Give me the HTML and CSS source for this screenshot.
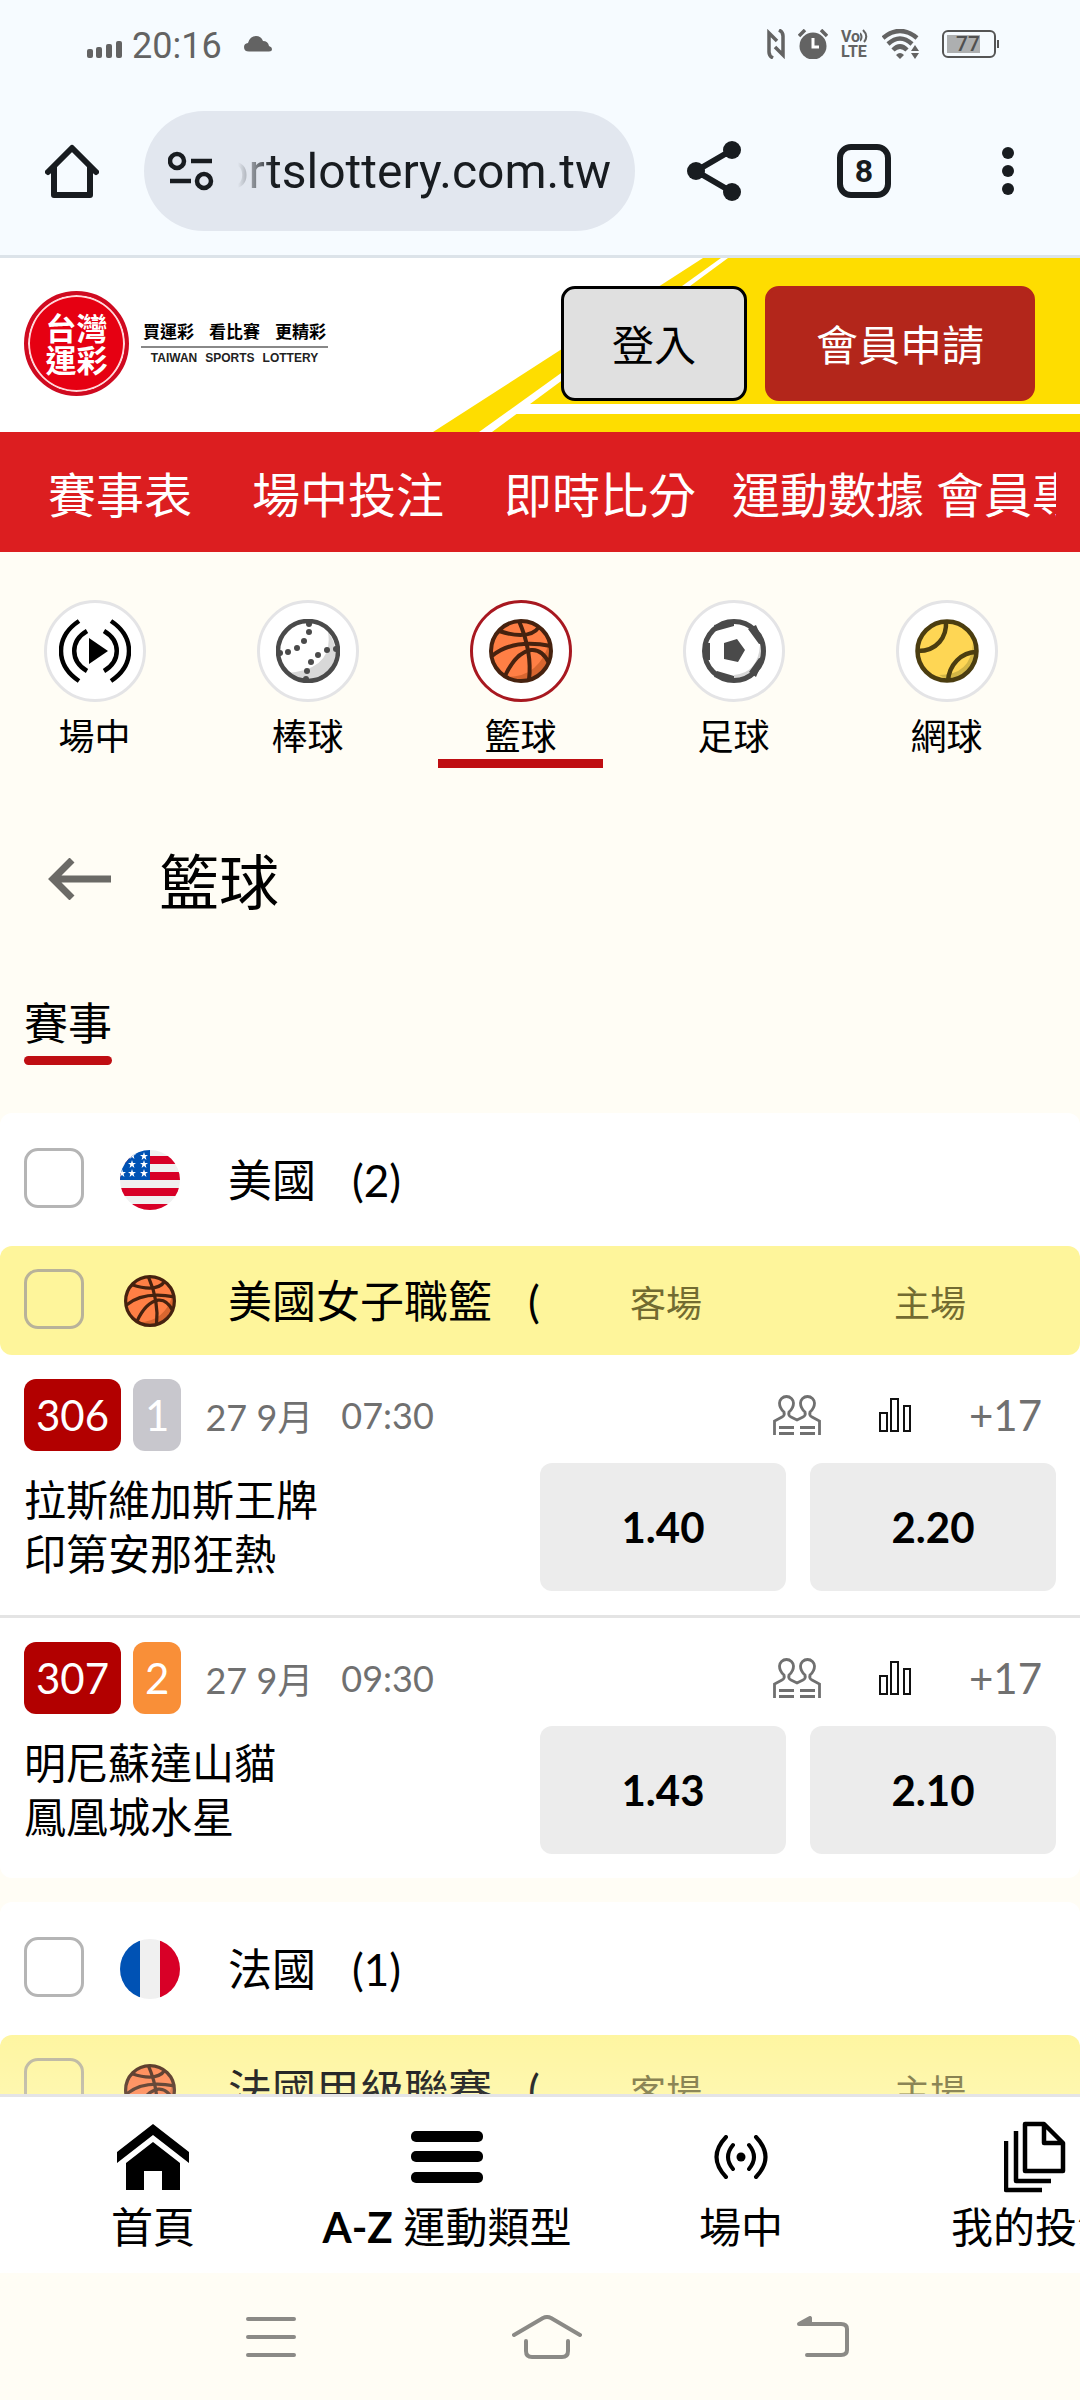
FILE: index.html
```html
<!DOCTYPE html>
<html lang="zh-Hant">
<head>
    <meta charset="UTF-8">
    <meta name="viewport" content="width=device-width, initial-scale=1.0">
    <title>台灣運彩 - 籃球</title>
    <link rel="stylesheet" href="styles.css">
</head>
<body>
    <!-- shared icons -->
    <svg class="sprite" aria-hidden="true">
        <symbol id="basketball" viewBox="0 0 64 64">
            <circle cx="32" cy="32" r="30" fill="#ff7f45"/>
            <path d="M60 24A30 30 0 0 1 18 58Q50 58 60 24Z" fill="#d9662f"/>
            <g fill="none" stroke="#46220f" stroke-width="4">
                <circle cx="32" cy="32" r="30"/>
                <path d="M30 2C36 16 43 36 40 61"/>
                <path d="M3 37C16 26 36 22 62 27"/>
                <path d="M10 12C22 16 42 20 50 8"/>
                <path d="M16 57C22 44 30 33 42 31C51 30 56 36 60 44"/>
            </g>
        </symbol>
        <symbol id="people" viewBox="0 0 48 40">
            <path d="M1.500 40V26L9 22Q12 20.500 11 17C7.500 14 6.500 11 6.500 8A7 6.500 0 0 1 20.500 8C20.500 11 19.500 14 16 17Q15 20.500 18 22L24 25L30 22Q33 20.500 32 17C28.500 14 27.500 11 27.500 8A7 6.500 0 0 1 41.500 8C41.500 11 40.500 14 37 17Q36 20.500 39 22L46.500 26V40M6 32.500H21M6 38.500H21M27 32.500H42M27 38.500H42" fill="none" stroke="#707070" stroke-width="2.800"/>
        </symbol>
        <symbol id="stats" viewBox="0 0 32 34">
            <path d="M1 15H8V33H1ZM12 1H19V33H12ZM25 8H31V33H25Z" fill="none" stroke="#111" stroke-width="2"/>
        </symbol>
        <symbol id="star" viewBox="0 0 10 10">
            <path d="M5 0L6.200 3.600H10L7 6L8 10L5 7.600L2 10L3 6L0 3.600H3.800Z" fill="#fff"/>
        </symbol>
    </svg>

    <div class="status-bar">
        <div class="status-left">
            <svg width="36" height="18" viewBox="0 0 36 18" fill="#636363"><rect y="8" width="6" height="9" rx="2"/><rect x="9" y="6" width="6" height="11" rx="2"/><rect x="19" y="3" width="6" height="14" rx="2"/><rect x="29" width="6" height="17" rx="2"/></svg>
            <span class="clock">20:16</span>
            <svg class="cloud" width="28" height="16" viewBox="0 0 28 16" fill="#636363"><path d="M5 15.500Q0 15.500 0 11Q0 7.500 4 7Q6 0 12 0Q17 0 19 5Q24 5 25 10Q28 11 28 13Q28 15.500 25 15.500Z"/></svg>
        </div>
        <div class="status-right">
            <svg width="18" height="30" viewBox="0 0 18 30" fill="none" stroke="#636363" stroke-width="3.500"><path d="M6 29Q2 27 2 23V4L10 12M12 1Q16 3 16 7V26L8 18"/></svg>
            <svg width="30" height="30" viewBox="0 0 30 30"><circle cx="15" cy="17" r="13.500" fill="#636363"/><path d="M1 7L7 1M29 7L23 1" stroke="#636363" stroke-width="3.500"/><path d="M15 9V18H21" fill="none" stroke="#fff" stroke-width="3"/></svg>
            <div class="volte">
                <span>Vo<svg width="8" height="14" viewBox="0 0 8 14" fill="none" stroke="#636363" stroke-width="2"><path d="M0 4Q3 8 0 12M3 1Q9 7 4 13"/></svg></span>
                <span>LTE</span>
            </div>
            <svg class="wifi" width="38" height="30" viewBox="0 0 38 30"><g fill="none" stroke="#636363" stroke-width="4.500"><path d="M1 9Q18 -5 35 9"/><path d="M6 15Q18 4 30 15"/><path d="M11 21Q18 14 25 21"/></g><path d="M14 26Q18 22 22 26L18 30ZM29 22L33 16L37 22ZM29 24H37L33 30Z" fill="#636363"/></svg>
            <div class="battery"><span>77</span></div>
        </div>
    </div>

    <div class="browser-bar">
        <button class="icon-btn" aria-label="Home">
            <svg width="54" height="54" viewBox="0 0 54 54" fill="none" stroke="#181c20" stroke-width="6" stroke-linecap="round" stroke-linejoin="round"><path d="M3 28L27 4L51 28M9 23V51H45V23"/></svg>
        </button>
        <div class="url-box">
            <svg width="46" height="40" viewBox="0 0 46 40" fill="none" stroke="#181c20" stroke-width="4.500"><circle cx="9" cy="10" r="7"/><path d="M23 10H44M2 30H23"/><circle cx="36" cy="30" r="7"/></svg>
            <input class="url" type="text" value="ortslottery.com.tw" aria-label="Address">
        </div>
        <button class="icon-btn" aria-label="Share">
            <svg width="54" height="60" viewBox="0 0 54 60" fill="#181c20"><path d="M45 9L9 30L45 51" fill="none" stroke="#181c20" stroke-width="6"/><circle cx="9" cy="30" r="9"/><circle cx="45" cy="9" r="9"/><circle cx="45" cy="51" r="9"/></svg>
        </button>
        <button class="tabs-btn" aria-label="Tabs">8</button>
        <button class="icon-btn" aria-label="Menu">
            <svg width="12" height="48" viewBox="0 0 12 48" fill="#181c20"><circle cx="6" cy="6" r="6"/><circle cx="6" cy="24" r="6"/><circle cx="6" cy="42" r="6"/></svg>
        </button>
    </div>

    <header class="site-header">
        <svg class="header-art" width="648" height="174" viewBox="0 0 648 174">
            <path d="M1 174L271 0H289L47 174Z" fill="#fedd00"/>
            <path d="M60 174L296 0H648V174Z" fill="#fedd00"/>
            <path d="M80 156L96 146H648V156Z" fill="#fff"/>
        </svg>
        <a class="logo" href="#">
            <span class="logo-mark"><span>台灣</span><span>運彩</span></span>
            <span class="logo-text">
                <span class="slogan"><span>買運彩</span><span>看比賽</span><span>更精彩</span></span>
                <span class="logo-en"><span>TAIWAN</span><span>SPORTS</span><span>LOTTERY</span></span>
            </span>
        </a>
        <div class="header-buttons">
            <button class="btn btn-login">登入</button>
            <button class="btn btn-join">會員申請</button>
        </div>
    </header>

    <nav class="main-nav">
        <div class="nav-scroll">
            <a href="#">賽事表</a>
            <a href="#">場中投注</a>
            <a href="#">即時比分</a>
            <a class="tight" href="#">運動數據</a>
            <a class="tight" href="#">會員專區</a>
        </div>
    </nav>

    <main>
        <div class="sports">
            <a class="sport" href="#">
                <span class="ring"><svg width="72" height="64" viewBox="0 0 72 64"><path d="M20 2C-4 18 -4 46 20 62M28 12C11 22 11 42 28 52M52 2C76 18 76 46 52 62M45 12C62 22 62 42 45 52" fill="none" stroke="#000" stroke-width="4.500"/><path d="M30 19L49 32L30 45Z"/></svg></span>
                <span class="sport-name">場中</span>
            </a>
            <a class="sport" href="#">
                <span class="ring"><svg width="64" height="64" viewBox="0 0 64 64"><circle cx="32" cy="32" r="30" fill="#fff"/><path d="M52 13Q58 50 12 54Q34 68 54 50Q66 32 52 13Z" fill="#d8d8d8"/><circle cx="32" cy="32" r="30" fill="none" stroke="#4a4a4a" stroke-width="4.500"/><g fill="#4a4a4a"><circle cx="33" cy="5" r="3"/><circle cx="33" cy="13" r="3"/><circle cx="28" cy="22" r="3"/><circle cx="21" cy="29" r="3"/><circle cx="12" cy="33" r="3"/><circle cx="4" cy="34" r="3"/><circle cx="60" cy="30" r="3"/><circle cx="51" cy="31" r="3"/><circle cx="42" cy="36" r="3"/><circle cx="35" cy="43" r="3"/><circle cx="31" cy="52" r="3"/><circle cx="30" cy="60" r="3"/></g></svg></span>
                <span class="sport-name">棒球</span>
            </a>
            <a class="sport active" href="#">
                <span class="ring"><svg width="64" height="64"><use href="#basketball"/></svg></span>
                <span class="sport-name">籃球</span>
            </a>
            <a class="sport" href="#">
                <span class="ring"><svg width="64" height="64" viewBox="0 0 64 64"><circle cx="32" cy="32" r="30" fill="#fff"/><path d="M58 26Q56 54 32 56V62Q62 58 62 26Z" fill="#d8d8d8"/><circle cx="32" cy="32" r="29.500" fill="none" stroke="#4a4a4a" stroke-width="5"/><path d="M22 24L35 20L43 31L36 43L22 40ZM14 12L32 7V2L12 6ZM46 10L57 25L62 24L54 6ZM47 53L57 39L62 40L54 58ZM15 52L32 57V62L12 58ZM2 24H8V41H2Z" fill="#4a4a4a"/></svg></span>
                <span class="sport-name">足球</span>
            </a>
            <a class="sport" href="#">
                <span class="ring"><svg width="64" height="64" viewBox="0 0 64 64"><circle cx="32" cy="32" r="30" fill="#fed654"/><path d="M58 24Q56 56 24 56Q44 68 58 48Q64 34 58 24Z" fill="#d3b646"/><g fill="none" stroke="#4b3d10" stroke-width="4.500"><circle cx="32" cy="32" r="29.500"/><path d="M31 2C32 18 22 32 3 32M33 62C34 46 46 33 62 33"/></g></svg></span>
                <span class="sport-name">網球</span>
            </a>
        </div>

        <div class="page-title">
            <button class="back-btn" aria-label="返回">
                <svg width="63" height="42" viewBox="0 0 63 42" fill="none" stroke="#6b6a66" stroke-width="7"><path d="M63 21H6M24 2L5 21L24 40"/></svg>
            </button>
            <h1>籃球</h1>
        </div>

        <div class="tabs">
            <a class="tab" href="#">賽事</a>
        </div>

        <section class="country">
            <div class="country-head">
                <input type="checkbox" id="usa">
                <span class="row-icon"><svg class="flag" width="60" height="60" viewBox="0 0 60 60"><path d="M0 0H60V60H0Z" fill="#f0f0f0"/><path d="M0 6H60V14H0ZM0 22H60V30H0ZM0 38H60V46H0ZM0 54H60V60H0Z" fill="#d80027"/><path d="M0 0H30V30H0Z" fill="#0052b4"/><use href="#star" x="8" y="1" width="8" height="8"/><use href="#star" x="20" y="2" width="8" height="8"/><use href="#star" x="8" y="10" width="8" height="8"/><use href="#star" x="20" y="10" width="8" height="8"/><use href="#star" x="-2" y="19" width="8" height="8"/><use href="#star" x="8" y="19" width="8" height="8"/><use href="#star" x="20" y="19" width="8" height="8"/></svg></span>
                <label class="row-name" for="usa"><span>美國</span><span>(2)</span></label>
            </div>
            <div class="league">
                <input type="checkbox" id="wnba">
                <span class="row-icon"><svg width="52" height="52"><use href="#basketball"/></svg></span>
                <label class="row-name" for="wnba"><span>美國女子職籃</span><span>(2)</span></label>
                <div class="sides"><span>客場</span><span>主場</span></div>
            </div>
            <article class="match">
                <div class="match-info">
                    <span class="badge">306</span>
                    <span class="badge badge-one">1</span>
                    <span class="date">27 9月</span>
                    <span class="time">07:30</span>
                    <span class="match-links">
                        <svg width="48" height="40"><use href="#people"/></svg>
                        <svg width="32" height="34"><use href="#stats"/></svg>
                        <a class="more" href="#">+17</a>
                    </span>
                </div>
                <div class="match-body">
                    <div class="teams">拉斯維加斯王牌<br>印第安那狂熱</div>
                    <button class="odds">1.40</button>
                    <button class="odds">2.20</button>
                </div>
            </article>
            <article class="match">
                <div class="match-info">
                    <span class="badge">307</span>
                    <span class="badge badge-two">2</span>
                    <span class="date">27 9月</span>
                    <span class="time">09:30</span>
                    <span class="match-links">
                        <svg width="48" height="40"><use href="#people"/></svg>
                        <svg width="32" height="34"><use href="#stats"/></svg>
                        <a class="more" href="#">+17</a>
                    </span>
                </div>
                <div class="match-body">
                    <div class="teams">明尼蘇達山貓<br>鳳凰城水星</div>
                    <button class="odds">1.43</button>
                    <button class="odds">2.10</button>
                </div>
            </article>
        </section>

        <section class="country">
            <div class="country-head">
                <input type="checkbox" id="france">
                <span class="row-icon"><svg class="flag" width="60" height="60" viewBox="0 0 60 60"><path d="M0 0H60V60H0Z" fill="#f0f0f0"/><path d="M0 0H20V60H0Z" fill="#0052b4"/><path d="M40 0H60V60H40Z" fill="#d80027"/></svg></span>
                <label class="row-name" for="france"><span>法國</span><span>(1)</span></label>
            </div>
            <div class="league">
                <input type="checkbox" id="lnb">
                <span class="row-icon"><svg width="52" height="52"><use href="#basketball"/></svg></span>
                <label class="row-name" for="lnb"><span>法國甲級聯賽</span><span>(1)</span></label>
                <div class="sides"><span>客場</span><span>主場</span></div>
            </div>
        </section>
    </main>

    <nav class="bottom-nav">
        <a href="#">
            <span class="bottom-icon"><svg width="72" height="66" viewBox="0 0 72 66"><path d="M36 0L72 28V39L36 11L0 39V28ZM36 18L63 39V66H45V47H27V66H9V39Z"/></svg></span>
            <span>首頁</span>
        </a>
        <a href="#">
            <span class="bottom-icon"><svg width="72" height="52" viewBox="0 0 72 52"><rect width="72" height="11" rx="5"/><rect y="20" width="72" height="11" rx="5"/><rect y="41" width="72" height="11" rx="5"/></svg></span>
            <span><b>A-Z</b> 運動類型</span>
        </a>
        <a href="#">
            <span class="bottom-icon"><svg width="54" height="44" viewBox="0 0 54 44"><path d="M12 2Q-7 22 12 42M19 10Q9 22 19 34M42 2Q61 22 42 42M35 10Q45 22 35 34" fill="none" stroke="#000" stroke-width="4" stroke-linecap="round"/><circle cx="27" cy="22" r="4.500"/></svg></span>
            <span>場中</span>
        </a>
        <a href="#">
            <span class="bottom-icon"><svg width="62" height="72" viewBox="0 0 62 72" fill="none" stroke="#000" stroke-width="4.500" stroke-linejoin="round"><path d="M21 3H40L59 22V50H21ZM40 3V22H59M12 10V60H47M2 20V69H38"/></svg></span>
            <span>我的投注</span>
        </a>
    </nav>

    <div class="system-bar">
        <svg width="50" height="40" viewBox="0 0 50 40"><path d="M2 2H48M2 20H48M2 38H48"/></svg>
        <svg width="70" height="44" viewBox="0 0 70 44"><path d="M2 20L31 3Q35 1 39 3L68 20M14 26V36Q14 42 20 42H50Q56 42 56 36V26"/></svg>
        <svg width="52" height="42" viewBox="0 0 52 42"><path d="M4 8H44Q50 8 50 13V34Q50 39 44 39H10"/><path d="M2 8L13 2V8Z"/></svg>
    </div>
</body>
</html>
```

FILE: styles.css
```css
* {
    box-sizing: border-box;
}
body {
    margin: 0;
    height: 100vh;
    display: flex;
    flex-direction: column;
    overflow: hidden;
    font-family: Lato, "Noto Sans CJK TC", sans-serif;
    font-size: 42px;
    color: #000;
    background: #fffdf5;
}
a {
    color: inherit;
    text-decoration: none;
}
button {
    font-family: inherit;
    font-size: inherit;
    color: inherit;
    border: none;
    background: none;
    padding: 0;
    cursor: pointer;
}
svg {
    display: block;
    flex: none;
}
.sprite {
    position: absolute;
    width: 0;
    height: 0;
}

/* phone status bar */
.status-bar {
    flex: none;
    height: 90px;
    padding: 0 84px 2px 87px;
    display: flex;
    justify-content: space-between;
    align-items: center;
    background: #f6fbff;
    color: #636363;
    font-family: Roboto, sans-serif;
}
.status-left,
.status-right {
    display: flex;
    align-items: center;
}
.status-left {
    padding-top: 4px;
}
.status-left svg {
    margin-top: 8px;
}
.clock {
    font-size: 36px;
    margin-left: 9px;
}
.status-left .cloud {
    margin: 0 0 4px 22px;
}
.status-right {
    gap: 13px;
}
.volte {
    width: 28px;
    font-size: 16px;
    line-height: 15px;
    font-weight: bold;
}
.volte span {
    display: flex;
}
.wifi {
    margin-right: 9px;
}
.battery {
    position: relative;
    width: 54px;
    height: 28px;
    padding: 3px;
    border: 2px solid #555;
    border-radius: 6px;
}
.battery::after {
    content: "";
    position: absolute;
    right: -5px;
    top: 8px;
    width: 2px;
    height: 8px;
    background: #555;
}
.battery span {
    display: block;
    width: 33px;
    padding-left: 9px;
    background: #adafb0;
    color: #505050;
    font-size: 21px;
    line-height: 18px;
    font-weight: 500;
}

/* browser toolbar */
.browser-bar {
    flex: none;
    height: 168px;
    padding: 0 66px 3px 45px;
    display: flex;
    align-items: center;
    background: #f6fbff;
    border-bottom: 3px solid #dce3e9;
}
.url-box {
    flex: 1;
    min-width: 0;
    height: 120px;
    margin: 0 52px 0 45px;
    padding: 0 24px;
    display: flex;
    align-items: center;
    gap: 6px;
    border-radius: 60px;
    background: #e2e7ef;
}
.url {
    flex: 1;
    min-width: 0;
    border: none;
    padding: 0;
    background: none;
    outline: none;
    color: #181c20;
    text-align: right;
    font-family: Roboto, sans-serif;
    font-size: 48px;
    -webkit-mask-image: linear-gradient(to right, transparent 18px, #000 54px);
    mask-image: linear-gradient(to right, transparent 18px, #000 54px);
}
.tabs-btn {
    width: 54px;
    height: 54px;
    margin: 0 111px 0 96px;
    border: 6px solid #181c20;
    border-radius: 14px;
    color: #181c20;
    font-family: Roboto, sans-serif;
    font-size: 32px;
    line-height: 42px;
    font-weight: bold;
}

/* site header */
.site-header {
    position: relative;
    flex: none;
    height: 174px;
    padding: 0 45px 3px 24px;
    display: flex;
    align-items: center;
    justify-content: space-between;
    background: #fff;
}
.header-art {
    position: absolute;
    top: 0;
    right: 0;
}
.logo {
    display: flex;
    align-items: center;
    gap: 12px;
}
.logo-mark {
    display: flex;
    flex-direction: column;
    align-items: center;
    justify-content: center;
    width: 105px;
    height: 105px;
    border: 4px solid #cf0a20;
    border-radius: 50%;
    background: #e60012;
    box-shadow: inset 0 0 0 2px #ffd9dc;
    color: #fff;
    font-size: 31px;
    line-height: 32px;
    font-weight: bold;
}
.logo-text {
    width: 187px;
}
.slogan,
.logo-en {
    display: flex;
    justify-content: center;
}
.slogan {
    gap: 15px;
    padding-bottom: 2px;
    border-bottom: 2px solid #888;
    font-size: 17px;
    line-height: 24px;
    font-weight: bold;
}
.logo-en {
    gap: 8px;
    font-family: "Liberation Sans", sans-serif;
    font-size: 12px;
    line-height: 20px;
    font-weight: bold;
    color: #222;
}
.header-buttons {
    position: relative;
    display: flex;
    gap: 18px;
}
.btn {
    height: 115px;
    padding: 0 48px 3px;
    border: 3px solid #000;
    border-radius: 14px;
}
.btn-login {
    background: #e0e0e0;
}
.btn-join {
    border-color: #b3261b;
    background: #b3261b;
    color: #fff;
}
.main-nav {
    flex: none;
    height: 120px;
    padding: 0 24px 0 18px;
    background: #dc1e20;
    color: #fff;
    font-size: 48px;
    line-height: 126px;
}
.nav-scroll {
    display: flex;
    overflow: hidden;
    height: 120px;
    white-space: nowrap;
}
.nav-scroll a {
    flex: none;
    padding: 0 30px;
}
.nav-scroll .tight {
    padding: 0 6px;
}

/* sports strip */
main {
    position: relative;
    flex: 1;
    min-height: 0;
    overflow: hidden;
}
main::after {
    content: "";
    position: absolute;
    left: 0;
    right: 0;
    bottom: 0;
    height: 84px;
    background: linear-gradient(to bottom, rgba(255, 255, 255, 0), rgba(255, 255, 255, 0.2));
}
.sports {
    display: flex;
    gap: 48px;
    padding: 48px 12px 0;
}
.sport {
    flex: 0 0 165px;
    display: flex;
    flex-direction: column;
    align-items: center;
    border-bottom: 9px solid transparent;
}
.sport.active {
    border-color: #bf0e12;
}
.ring {
    width: 102px;
    height: 102px;
    display: flex;
    align-items: center;
    justify-content: center;
    border: 3px solid #e4e4e6;
    border-radius: 50%;
    background: #fff;
}
.active .ring {
    border-color: #a81820;
}
.sport-name {
    margin-top: 12px;
    font-size: 36px;
    line-height: 45px;
}
.page-title {
    display: flex;
    align-items: center;
    gap: 48px;
    margin-top: 72px;
    padding: 0 48px;
}
.back-btn {
    margin-bottom: 6px;
}
.page-title h1 {
    margin: 0;
    font-size: 60px;
    line-height: 84px;
    font-weight: normal;
}
.tabs {
    display: flex;
    margin: 69px 24px 48px;
}
.tab {
    position: relative;
    padding-bottom: 12px;
    font-size: 44px;
    line-height: 60px;
}
.tab::after {
    content: "";
    position: absolute;
    left: 0;
    right: 0;
    bottom: 0;
    height: 9px;
    border-radius: 5px;
    background: #bf0e12;
}

/* match list */
.country {
    margin-bottom: 24px;
    background: #fff;
    border-radius: 12px;
}
.country-head,
.league {
    display: flex;
    align-items: center;
    padding: 0 24px;
    height: 133px;
}
.league {
    height: 109px;
    border-radius: 12px;
    background: #fef59b;
}
input[type="checkbox"] {
    appearance: none;
    flex: none;
    width: 60px;
    height: 60px;
    margin: 0 36px 4px 0;
    border: 3px solid #b5b5b5;
    border-radius: 14px;
}
.league input[type="checkbox"] {
    border-color: #b8b29a;
}
.row-icon {
    flex: none;
    width: 60px;
    display: flex;
    justify-content: center;
    margin-right: 48px;
}
.flag {
    border-radius: 50%;
}
.row-name {
    flex: 1;
    min-width: 0;
    display: flex;
    gap: 36px;
    overflow: hidden;
    white-space: nowrap;
    font-size: 44px;
    line-height: 60px;
}
.sides {
    flex: none;
    display: flex;
    gap: 12px;
    font-size: 36px;
    color: #726b31;
}
.sides span {
    width: 252px;
    text-align: center;
}
.match {
    padding: 24px;
}
.match + .match {
    border-top: 3px solid #e4e4e4;
}
.match-info {
    display: flex;
    align-items: center;
    color: #707070;
    font-size: 36px;
}
.badge {
    padding: 0 12px;
    margin-right: 12px;
    border-radius: 12px;
    background: #b20000;
    color: #fff;
    font-size: 42px;
    line-height: 72px;
}
.badge-one {
    margin-right: 24px;
    background: #c8c7cd;
}
.badge-two {
    margin-right: 24px;
    background: #f98f38;
}
.date {
    margin-right: 28px;
}
.match-links {
    display: flex;
    align-items: center;
    gap: 58px;
    margin-left: auto;
    padding-right: 14px;
}
.more {
    font-size: 42px;
}
.match-body {
    display: flex;
    gap: 24px;
    margin-top: 12px;
}
.teams {
    flex: 1;
    padding-top: 10px;
    line-height: 54px;
}
.odds {
    width: 246px;
    height: 128px;
    border-radius: 12px;
    background: #ececec;
    font-weight: bold;
}

/* bottom navigation */
.bottom-nav {
    flex: none;
    display: flex;
    overflow: hidden;
    height: 179px;
    padding-left: 6px;
    border-top: 3px solid #e4e4e6;
    background: #fff;
}
.bottom-nav a {
    flex: 0 0 294px;
    display: flex;
    flex-direction: column;
    align-items: center;
    padding-top: 24px;
    line-height: 60px;
    white-space: nowrap;
}
.bottom-icon {
    height: 72px;
    margin-bottom: 4px;
    display: flex;
    align-items: center;
}
.system-bar {
    flex: none;
    height: 127px;
    padding: 0 231px 0 246px;
    display: flex;
    align-items: center;
    justify-content: space-between;
    background: #fffdf5;
}
.system-bar path {
    fill: none;
    stroke: #8b8a86;
    stroke-width: 4;
    stroke-linecap: round;
    stroke-linejoin: round;
}
```
